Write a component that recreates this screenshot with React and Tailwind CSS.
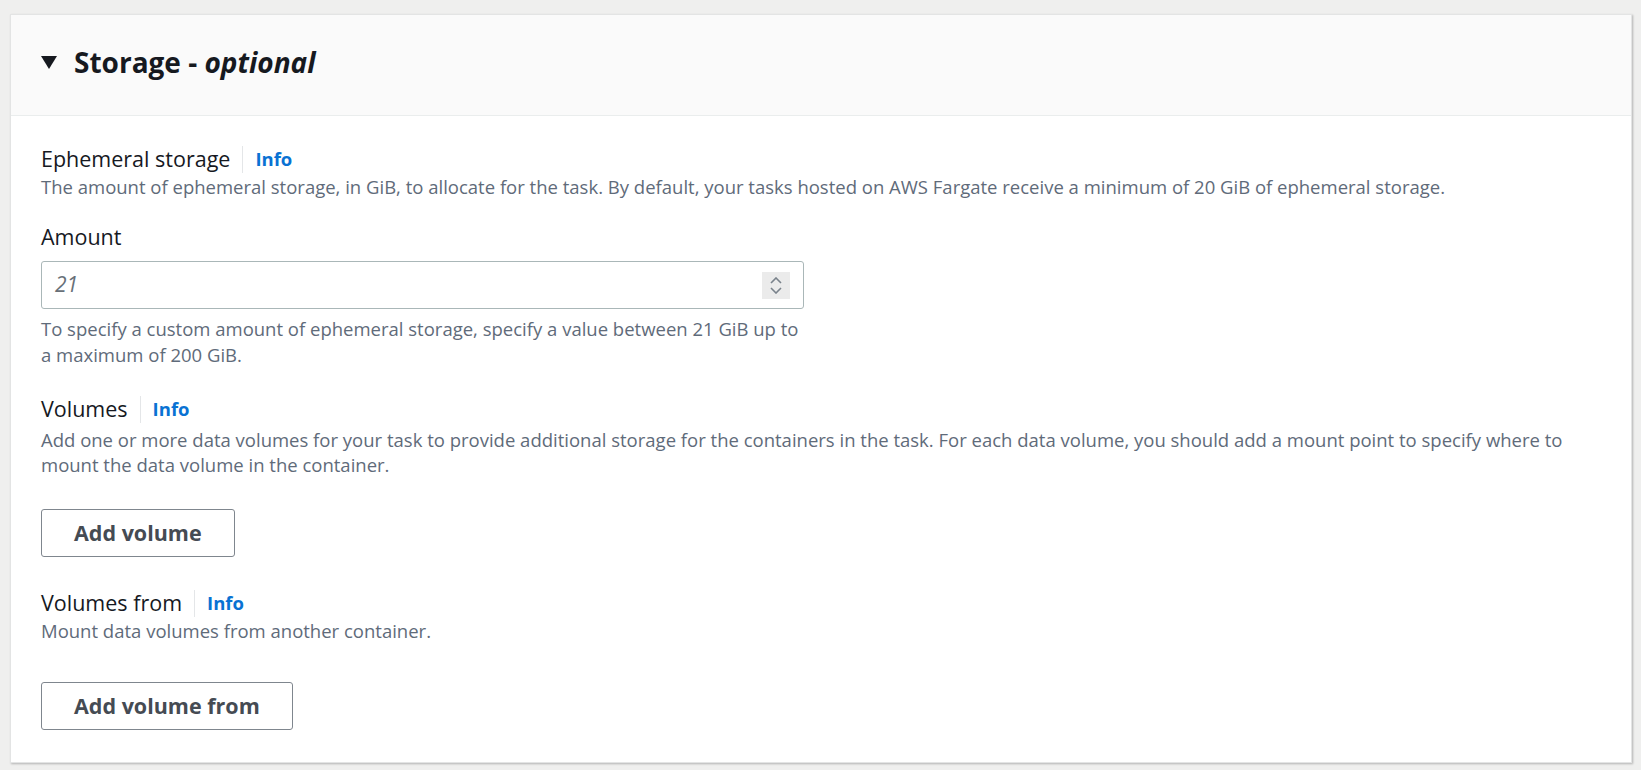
import React from "react";

function Label({ children }) {
  return (
    <div className="flex items-center h-[30px]">
      <span className="text-[21.5px] text-[#16191f] leading-[30px]">{children}</span>
      <span className="mx-[12px] w-px h-[27px] bg-[#e4e6e8]" />
      <span className="text-[18.5px] font-bold text-[#0972d3] leading-[30px]">Info</span>
    </div>
  );
}

function Button({ children }) {
  return (
    <button className="h-[48px] px-[32px] border border-[#7f868e] rounded-[3px] bg-white text-[21.5px] font-bold text-[#454b53] leading-none">
      {children}
    </button>
  );
}

export default function App() {
  return (
    <div
      className="w-[1641px] h-[770px] bg-[#efefee] pt-[14px] pl-[10px] pr-[9px]"
      style={{ fontFamily: '"Open Sans", "Noto Sans", sans-serif' }}
    >
      <div className="bg-white border border-[#e3e4e4] shadow-[1px_1px_2px_rgba(0,0,0,0.25)] h-[749px]">
        <div className="h-[101px] bg-[#fafafa] border-b border-[#eaeded] flex items-center pl-[30px] pb-[6px]">
          <svg width="16" height="13" viewBox="0 0 16 13" className="mr-[17px]">
            <polygon points="0,0 16,0 8,13" fill="#16191f" />
          </svg>
          <span className="text-[28px] font-bold text-[#16191f]">
            Storage - <span className="italic">optional</span>
          </span>
        </div>
        <div className="pl-[30px] pr-[40px] pt-[28px]">
          <Label>Ephemeral storage</Label>
          <p className="text-[18.5px] leading-[26px] text-[#5f6b7a]">
            The amount of ephemeral storage, in GiB, to allocate for the task. By default, your tasks hosted on AWS Fargate receive a minimum of 20 GiB of ephemeral storage.
          </p>
          <div className="mt-[22px] text-[21.5px] leading-[30px] text-[#16191f]">Amount</div>
          <div className="mt-[9px] w-[763px] h-[48px] border border-[#aab7b8] rounded-[3px] flex items-center pl-[13px] pr-[13px]">
            <span className="flex-1 italic text-[21px] text-[#687078]">21</span>
            <div className="w-[28px] h-[27px] bg-[#ebebeb] flex flex-col items-center justify-center gap-[3px]">
              <svg width="12" height="7" viewBox="0 0 12 7">
                <polyline points="1,6 6,1 11,6" fill="none" stroke="#79828b" strokeWidth="1.6" />
              </svg>
              <svg width="12" height="7" viewBox="0 0 12 7">
                <polyline points="1,1 6,6 11,1" fill="none" stroke="#79828b" strokeWidth="1.6" />
              </svg>
            </div>
          </div>
          <p className="mt-[7px] w-[765px] text-[18.5px] leading-[26px] text-[#5f6b7a]">
            To specify a custom amount of ephemeral storage, specify a value between 21 GiB up to a maximum of 200 GiB.
          </p>
          <div className="mt-[26px]">
            <Label>Volumes</Label>
          </div>
          <p className="mt-[3px] text-[18.5px] leading-[25px] text-[#5f6b7a]">
            Add one or more data volumes for your task to provide additional storage for the containers in the task. For each data volume, you should add a mount point to specify where to mount the data volume in the container.
          </p>
          <div className="mt-[32px]">
            <Button>Add volume</Button>
          </div>
          <div className="mt-[31px]">
            <Label>Volumes from</Label>
          </div>
          <p className="text-[18.5px] leading-[26px] text-[#5f6b7a]">Mount data volumes from another container.</p>
          <div className="mt-[38px]">
            <Button>Add volume from</Button>
          </div>
        </div>
      </div>
    </div>
  );
}
